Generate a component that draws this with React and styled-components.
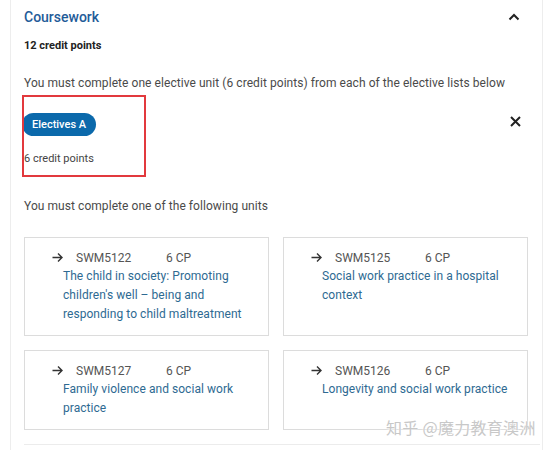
import React from "react";
import styled, { createGlobalStyle } from "styled-components";

const Global = createGlobalStyle`
  html, body { margin: 0; padding: 0; background: #fff; }
  body { font-family: Roboto, "Noto Sans", Arial, sans-serif; color: #444; }
  * { box-sizing: border-box; }
`;

const Page = styled.div`
  position: relative;
  width: 554px;
  height: 450px;
  overflow: hidden;
`;

const Panel = styled.section`
  margin-left: 10px;
  width: 533px;
  min-height: 450px;
  border-left: 1px solid #ededed;
  border-right: 1px solid #ededed;
  padding: 7px 13px 0 13px;
`;

const HeaderRow = styled.div`
  display: flex;
  justify-content: space-between;
  align-items: center;
  height: 20px;
`;

const Title = styled.h2`
  margin: 0;
  font-size: 14px;
  line-height: 20px;
  font-weight: 500;
  color: #1f5c99;
`;

const IconBtn = styled.span`
  display: flex;
  align-items: center;
  justify-content: center;
  width: 14px;
  height: 14px;
  margin-right: ${(p) => p.$mr || 8}px;
  margin-top: ${(p) => p.$mt || 0}px;
  color: #222;
`;

const Credits = styled.div`
  margin-top: ${(p) => p.$mt}px;
  font-size: 11px;
  line-height: 16px;
  font-weight: ${(p) => (p.$bold ? 700 : 400)};
  color: ${(p) => (p.$bold ? "#222" : "#444")};
`;

const Para = styled.p`
  margin: ${(p) => p.$mt}px 0 0;
  font-size: 12px;
  line-height: 18px;
  letter-spacing: 0.06px;
  color: #4a4a4a;
`;

const ElectiveBlock = styled.div`
  position: relative;
  margin-top: 21px;
`;

const Highlight = styled.div`
  position: absolute;
  top: -18px;
  left: -2px;
  width: 124px;
  height: 82px;
  border: 2px solid #e2393d;
  pointer-events: none;
`;

const ElectiveHead = styled.div`
  display: flex;
  justify-content: space-between;
  align-items: flex-start;
`;

const Pill = styled.span`
  display: inline-flex;
  align-items: center;
  height: 23px;
  padding: 0 10px;
  margin-left: -2px;
  border-radius: 12px;
  background: #0b69ab;
  color: #fff;
  font-size: 11px;
  font-weight: 500;
`;

const Grid = styled.div`
  margin-top: 22px;
  display: grid;
  grid-template-columns: 245px 245px;
  column-gap: 14px;
  row-gap: 14px;
`;

const Card = styled.div`
  border: 1px solid #dcdcdc;
  padding: 10px 12px 11px 38px;
  background: #fff;
`;

const CodeRow = styled.div`
  display: flex;
  align-items: center;
  height: 19px;
  margin-left: -11px;
  font-size: 12px;
  color: #555;
`;

const Arrow = styled.svg`
  width: 11px;
  height: 11px;
  margin-right: 13px;
  flex: none;
`;

const Code = styled.span`
  width: 90px;
`;

const UnitTitle = styled.div`
  font-size: 12px;
  line-height: 19px;
  letter-spacing: 0.05px;
  color: #2e6a92;
`;

const Divider = styled.hr`
  margin: 14px 0 0;
  border: 0;
  border-top: 1px solid #ececec;
  width: 516px;
`;

const Watermark = styled.div`
  position: absolute;
  left: 386px;
  top: 416px;
  font-family: "Noto Sans CJK SC", sans-serif;
  font-size: 16px;
  line-height: 22px;
  color: #c8c8c8;
  letter-spacing: 0.3px;
  text-shadow: 0 0 2px #fff, 0 0 2px #fff;
`;

const units = [
  { code: "SWM5122", title: "The child in society: Promoting children's well – being and responding to child maltreatment" },
  { code: "SWM5125", title: "Social work practice in a hospital context" },
  { code: "SWM5127", title: "Family violence and social work practice" },
  { code: "SWM5126", title: "Longevity and social work practice" },
];

const ChevronUp = () => (
  <svg width="12" height="8" viewBox="0 0 12 8">
    <path d="M1.5 6.5 L6 2 L10.5 6.5" fill="none" stroke="currentColor" strokeWidth="2" />
  </svg>
);

const Close = () => (
  <svg width="11" height="11" viewBox="0 0 11 11">
    <path d="M1 1 L10 10 M10 1 L1 10" fill="none" stroke="currentColor" strokeWidth="2" />
  </svg>
);

const UnitCard = ({ code, title }) => (
  <Card>
    <CodeRow>
      <Arrow viewBox="0 0 11 11">
        <path d="M0.5 5.5 H10 M6 1.5 L10 5.5 L6 9.5" fill="none" stroke="#333" strokeWidth="1.4" />
      </Arrow>
      <Code>{code}</Code>
      <span>6 CP</span>
    </CodeRow>
    <UnitTitle>{title}</UnitTitle>
  </Card>
);

export default function App() {
  return (
    <Page>
      <Global />
      <Panel>
        <HeaderRow>
          <Title>Coursework</Title>
          <IconBtn $mr={8}><ChevronUp /></IconBtn>
        </HeaderRow>
        <Credits $bold $mt={11}>12 credit points</Credits>
        <Para $mt={20}>
          You must complete one elective unit (6 credit points) from each of the elective lists below
        </Para>
        <ElectiveBlock>
          <Highlight />
          <ElectiveHead>
            <Pill>Electives A</Pill>
            <IconBtn $mr={7} $mt={1}><Close /></IconBtn>
          </ElectiveHead>
          <Credits $mt={15}>6 credit points</Credits>
        </ElectiveBlock>
        <Para $mt={30}>You must complete one of the following units</Para>
        <Grid>
          {units.map((u) => (
            <UnitCard key={u.code} {...u} />
          ))}
        </Grid>
        <Divider />
      </Panel>
      <Watermark>知乎 @魔力教育澳洲</Watermark>
    </Page>
  );
}
